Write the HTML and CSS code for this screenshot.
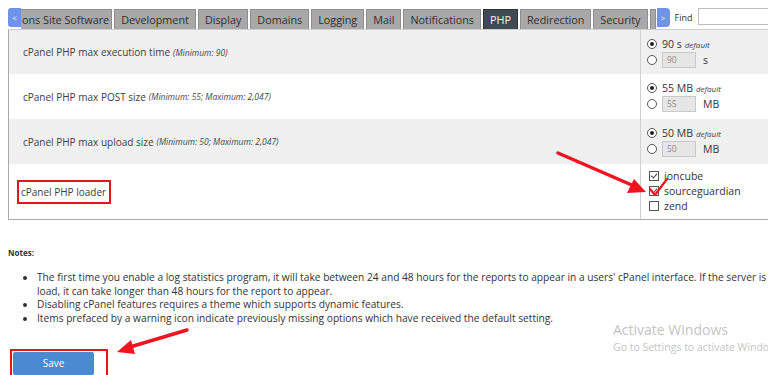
FILE: index.html
```html
<!DOCTYPE html>
<html>
<head>
<meta charset="utf-8">
<link rel="stylesheet" href="styles.css">
</head>
<body>
<div class="page">
  <div class="tabbar">
    <span class="nav nav-left">&lt;</span>
    <div class="tabs">
      <span class="tab first">ons Site Software</span>
      <span class="tab">Development</span>
      <span class="tab">Display</span>
      <span class="tab">Domains</span>
      <span class="tab">Logging</span>
      <span class="tab">Mail</span>
      <span class="tab">Notifications</span>
      <span class="tab active">PHP</span>
      <span class="tab">Redirection</span>
      <span class="tab">Security</span>
      <span class="tab stub"></span>
    </div>
    <span class="nav nav-right">&gt;</span>
    <label class="find">Find</label>
    <span class="find-input"></span>
  </div>

  <div class="settings">
    <div class="row shade">
      <div class="label">cPanel PHP max execution time <em>(Minimum: 90)</em></div>
      <div class="value">
        <div class="opt"><span class="radio on"></span><span class="val">90 s</span> <em>default</em></div>
        <div class="opt"><span class="radio"></span><span class="box">90</span><span class="unit">s</span></div>
      </div>
    </div>
    <div class="row">
      <div class="label">cPanel PHP max POST size <em>(Minimum: 55; Maximum: 2,047)</em></div>
      <div class="value">
        <div class="opt"><span class="radio on"></span><span class="val">55 MB</span> <em>default</em></div>
        <div class="opt"><span class="radio"></span><span class="box">55</span><span class="unit">MB</span></div>
      </div>
    </div>
    <div class="row shade">
      <div class="label">cPanel PHP max upload size <em>(Minimum: 50; Maximum: 2,047)</em></div>
      <div class="value">
        <div class="opt"><span class="radio on"></span><span class="val">50 MB</span> <em>default</em></div>
        <div class="opt"><span class="radio"></span><span class="box">50</span><span class="unit">MB</span></div>
      </div>
    </div>
    <div class="row tall">
      <div class="label"><span class="mark">cPanel PHP loader</span></div>
      <div class="value checks">
        <div class="opt"><span class="check on"></span><span class="val">ioncube</span></div>
        <div class="opt"><span class="check on"></span><span class="val">sourceguardian</span></div>
        <div class="opt"><span class="check"></span><span class="val">zend</span></div>
      </div>
    </div>
  </div>

  <div class="notes">
    <div class="notes-title">Notes:</div>
    <ul>
      <li>The first time you enable a log statistics program, it will take between 24 and 48 hours for the reports to appear in a users' cPanel interface. If the server is under heavy<br>load, it can take longer than 48 hours for the report to appear.</li>
      <li>Disabling cPanel features requires a theme which supports dynamic features.</li>
      <li>Items prefaced by a warning icon indicate previously missing options which have received the default setting.</li>
    </ul>
  </div>

  <div class="actions">
    <span class="save-mark"><button class="save">Save</button></span>
  </div>

  <div class="watermark">
    <div class="wm1">Activate Windows</div>
    <div class="wm2">Go to Settings to activate Windows.</div>
  </div>

  <svg class="overlay" width="768" height="375" viewBox="0 0 768 375">
    <line x1="558" y1="153" x2="634" y2="186" stroke="#f0141e" stroke-width="3.5" stroke-linecap="round"/>
    <polygon points="646,192 627,193 634,179" fill="#f0141e"/>
    <polyline points="650,189 655,195 667,179" fill="none" stroke="#f0141e" stroke-width="2.2" stroke-linecap="round" stroke-linejoin="round"/>
    <line x1="187" y1="330" x2="130" y2="347" stroke="#f0141e" stroke-width="3.5" stroke-linecap="round"/>
    <polygon points="117,352 131,340 135,354" fill="#f0141e"/>
  </svg>
</div>
</body>
</html>
```
FILE: styles.css
```css
* { box-sizing: border-box; }
html, body { margin: 0; padding: 0; background: #fff; overflow: hidden; }
body { width: 768px; height: 375px; font-family: "Open Sans", "DejaVu Sans", sans-serif; color: #333; }
.page { position: relative; width: 768px; height: 375px; overflow: hidden; }

.tabbar { display: flex; align-items: flex-start; height: 29px; padding: 8px 0 0 8px; }
.nav { width: 13px; height: 19px; background: #6f92ea; color: #fff; font-size: 8px; line-height: 19px; text-align: center; flex: none; }
.nav-left { border-radius: 3px 0 0 3px; }
.nav-right { border-radius: 0 4px 4px 0; margin-left: 1px; }
.tabs { display: flex; gap: 2px; margin-top: 1px; }
.tab { height: 20px; background: #a8a8a8; border: 1px solid #8e8e8e; border-bottom: none; color: #2f2f2f; font-size: 10.8px; line-height: 19px; padding: 0 6px; white-space: nowrap; }
.tab.first { padding: 0 2px 0 1px; border-left: none; }
.tab.active { background: #3f4a53; color: #f2f2f2; border-color: #2d353b; }
.tab.stub { width: 6px; padding: 0; }
.find { font-size: 9px; color: #333; margin: 3px 0 0 5px; }
.find-input { width: 80px; height: 17px; border: 1px solid #bdbdbd; margin-left: 5px; flex: none; background: #fff; }

.settings { margin-left: 8px; width: 780px; border-left: 1px solid #a9a9a9; border-top: 1px solid #cfcfcf; border-bottom: 1px solid #a9a9a9; }
.row { display: grid; grid-template-columns: 631px 1fr; height: 44px; }
.row:nth-child(2), .row:nth-child(3) { height: 45px; }
.row.tall { height: 55px; }
.row.shade { background: #f0f0f0; }
.label { display: flex; align-items: center; padding-left: 14px; font-size: 10px; color: #3d3d3d; }
.label em { font-size: 8.5px; margin-left: 3px; color: #444; }
.value { border-left: 1px solid #d0d0d0; padding: 6px 0 0 6px; }
.opt { display: flex; align-items: center; height: 16px; font-size: 10.5px; color: #333; }
.opt em { font-size: 8px; margin-left: 3px; color: #444; }
.radio { width: 10px; height: 10px; border: 1px solid #555; border-radius: 50%; background: #fff; margin-right: 5px; position: relative; flex: none; }
.radio.on::after { content: ""; position: absolute; left: 2px; top: 2px; width: 4px; height: 4px; border-radius: 50%; background: #222; }
.box { width: 34px; height: 16px; background: #e6e6e6; border: 1px solid #c9c9c9; font-size: 8.5px; color: #8a8a8a; line-height: 14px; padding-left: 4px; margin-right: 7px; }
.unit { font-size: 10.5px; }
.checks { padding: 4px 0 0 8px; }
.checks .opt { height: 15px; }
.check { width: 10px; height: 10px; border: 1px solid #555; margin-right: 5px; position: relative; flex: none; background: #fff; }
.check.on::after { content: ""; position: absolute; left: 2px; top: 0px; width: 3px; height: 5px; border: solid #444; border-width: 0 1px 1px 0; transform: rotate(40deg); }
.mark { border: 2px solid #e8141c; padding: 3px 3px 3px 2px; margin-left: -6px; font-size: 10px; }

.notes { padding: 27px 0 0 8px; }
.notes-title { font-size: 8px; font-weight: bold; color: #333; }
.notes ul { margin: 13px 0 0; padding-left: 29px; font-size: 10.2px; line-height: 13.7px; color: #333; white-space: nowrap; }

.actions { padding: 23px 0 0 10px; }
.save-mark { display: inline-block; border: 2px solid #e8141c; padding: 1px 12px 4px 1px; }
.save { display: block; width: 81px; height: 23px; border: none; border-radius: 2px; background: #4a8ad0; color: #fff; font-family: "Open Sans", sans-serif; font-size: 10px; }

.watermark { position: absolute; left: 613px; top: 321px; color: #c4c4c4; white-space: nowrap; }
.wm1 { font-size: 14px; line-height: 18px; }
.wm2 { font-size: 10.5px; line-height: 16px; }
.overlay { position: absolute; left: 0; top: 0; pointer-events: none; }
```
